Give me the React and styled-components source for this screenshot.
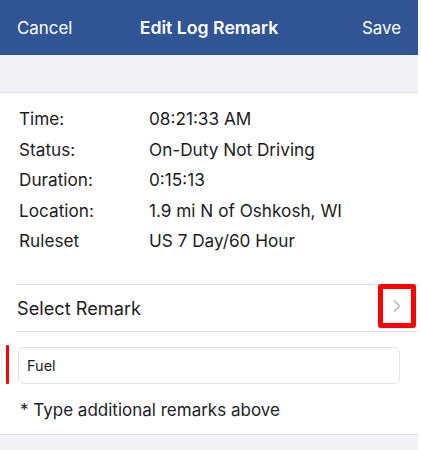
import React from "react";
import styled, { createGlobalStyle } from "styled-components";

const Global = createGlobalStyle`
  html, body { margin: 0; padding: 0; background: #ffffff; }
  body { font-family: Inter, "Noto Sans", sans-serif; -webkit-font-smoothing: antialiased; }
`;

const Screen = styled.div`
  width: 418px;
  height: 450px;
  background: #ffffff;
  display: flex;
  flex-direction: column;
  overflow: hidden;
`;

const NavBar = styled.header`
  height: 55px;
  flex: none;
  background: #305494;
  display: grid;
  grid-template-columns: 1fr auto 1fr;
  align-items: center;
  padding: 0 17px;
  color: #ffffff;
`;

const NavButton = styled.span`
  justify-self: ${(p) => (p.$right ? "end" : "start")};
  font-weight: 400;
  font-size: 16.9px;
`;

const NavTitle = styled.span`
  font-weight: 600;
  font-size: 17.7px;
`;

const Band = styled.div`
  height: ${(p) => p.$h}px;
  flex: none;
  background: #f2f2f7;
  border-bottom: ${(p) => (p.$bottom ? "1px solid #dedee3" : "none")};
  border-top: ${(p) => (p.$top ? "1px solid #dedee3" : "none")};
`;

const Details = styled.div`
  display: grid;
  grid-template-columns: 130px 1fr;
  padding: 11px 0 27px 19px;
  color: #1c1c1e;
  font-size: 17.2px;
`;

const Cell = styled.div`
  height: 30.5px;
  line-height: 30.5px;
  white-space: nowrap;
`;

const Divider = styled.div`
  height: 1px;
  flex: none;
  margin-left: 16px;
  background: #dfdfe3;
`;

const SelectRow = styled.div`
  height: 46px;
  flex: none;
  display: flex;
  align-items: center;
  justify-content: space-between;
  padding-left: 17px;
  padding-right: 2px;
  font-size: 18.2px;
  color: #1c1c1e;
`;

const ChevronBox = styled.div`
  width: 28px;
  height: 34px;
  margin-bottom: 4px;
  border: 5px solid #ff0000;
  border-radius: 3px;
  display: flex;
  align-items: center;
  justify-content: center;
`;

const InputRow = styled.div`
  position: relative;
  flex: none;
  padding: 15px 18px 0 18px;
`;

const Marker = styled.div`
  position: absolute;
  left: 6px;
  top: 13px;
  width: 3px;
  height: 39px;
  background: #ff0000;
  border-radius: 1px;
`;

const TextBox = styled.div`
  height: 37px;
  border: 1px solid #e3e3e6;
  border-radius: 6px;
  display: flex;
  align-items: center;
  padding-left: 8px;
  font-size: 14.5px;
  color: #1c1c1e;
  box-sizing: border-box;
`;

const Hint = styled.div`
  flex: none;
  padding: 15px 0 13px 20px;
  font-size: 17px;
  color: #1c1c1e;
  height: 22px;
  line-height: 22px;
`;

const rows = [
  ["Time:", "08:21:33 AM"],
  ["Status:", "On-Duty Not Driving"],
  ["Duration:", "0:15:13"],
  ["Location:", "1.9 mi N of Oshkosh, WI"],
  ["Ruleset", "US 7 Day/60 Hour"],
];

export default function App() {
  return (
    <>
      <Global />
      <Screen>
        <NavBar>
          <NavButton>Cancel</NavButton>
          <NavTitle>Edit Log Remark</NavTitle>
          <NavButton $right>Save</NavButton>
        </NavBar>
        <Band $h={37} $bottom />
        <Details>
          {rows.map(([k, v]) => (
            <React.Fragment key={k}>
              <Cell>{k}</Cell>
              <Cell>{v}</Cell>
            </React.Fragment>
          ))}
        </Details>
        <Divider />
        <SelectRow>
          <span>Select Remark</span>
          <ChevronBox>
            <svg width="10" height="14" viewBox="0 0 10 14">
              <path d="M2.5 2 L7.5 7 L2.5 12" fill="none" stroke="#c4c4c7" strokeWidth="1.8" strokeLinecap="round" strokeLinejoin="round" />
            </svg>
          </ChevronBox>
        </SelectRow>
        <Divider />
        <InputRow>
          <Marker />
          <TextBox>Fuel</TextBox>
        </InputRow>
        <Hint>* Type additional remarks above</Hint>
        <Band $h={30} $top />
      </Screen>
    </>
  );
}
